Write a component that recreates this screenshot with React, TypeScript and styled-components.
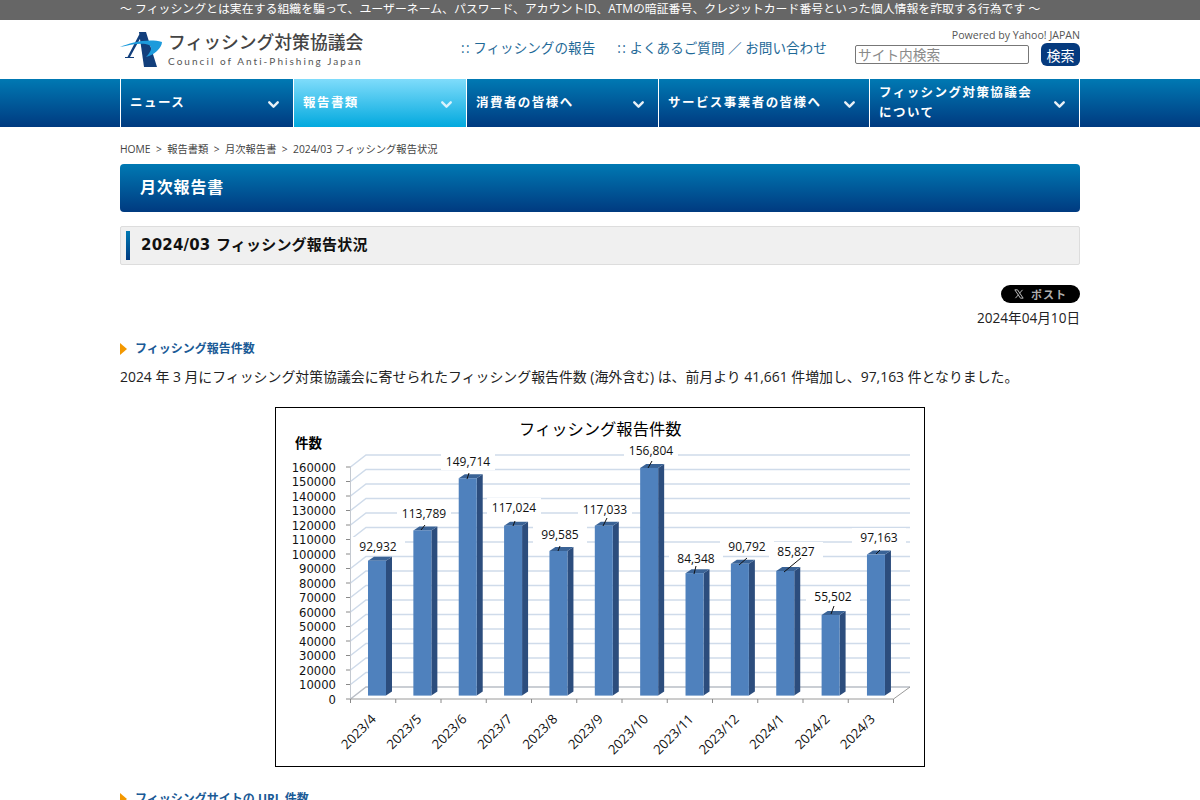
import React from "react";
import styled, { createGlobalStyle } from "styled-components";
import { ChevronDown } from "lucide-react";

const FONT = `"Open Sans", "Noto Sans CJK JP", sans-serif`;

const GlobalStyle = createGlobalStyle`
  html, body {
    margin: 0;
    padding: 0;
    height: 800px;
    overflow: hidden;
    background: #fff;
    color: #222;
    font-family: ${FONT};
  }
`;

const navItems = [
  { label: "ニュース", width: 173 },
  { label: "報告書類", width: 173, active: true },
  { label: "消費者の皆様へ", width: 192 },
  { label: "サービス事業者の皆様へ", width: 211 },
  { label: "フィッシング対策協議会について", width: 210 },
];

const bars = [
  { month: "2023/4", value: 92932, text: "92,932", lx: 378, ly: 546 },
  { month: "2023/5", value: 113789, text: "113,789", lx: 424, ly: 513, tick: [421, 530, 425, 525] },
  { month: "2023/6", value: 149714, text: "149,714", lx: 468, ly: 461, tick: [467, 479, 469, 473] },
  { month: "2023/7", value: 117024, text: "117,024", lx: 514, ly: 507, tick: [513, 526, 515, 521] },
  { month: "2023/8", value: 99585, text: "99,585", lx: 560, ly: 534, tick: [558, 551, 560, 546] },
  { month: "2023/9", value: 117033, text: "117,033", lx: 605, ly: 509, tick: [603, 526, 607, 518] },
  { month: "2023/10", value: 156804, text: "156,804", lx: 651, ly: 450, tick: [648, 468, 652, 461] },
  { month: "2023/11", value: 84348, text: "84,348", lx: 696, ly: 558, tick: [694, 574, 696, 566] },
  { month: "2023/12", value: 90792, text: "90,792", lx: 747, ly: 546, tick: [739, 565, 747, 558] },
  { month: "2024/1", value: 85827, text: "85,827", lx: 796, ly: 551, tick: [784, 572, 801, 558] },
  { month: "2024/2", value: 55502, text: "55,502", lx: 833, ly: 596, tick: [831, 614, 834, 606] },
  { month: "2024/3", value: 97163, text: "97,163", lx: 879, ly: 537, tick: [876, 554, 880, 550] },
];

const ZERO = 699;
const STEP = 14.5;
const FLOOR = 695.6;
const ticks = Array.from({ length: 17 }, (_, i) => i * 10000);

const PhishingChart = () => (
  <ChartSvg viewBox="275 407 650 360" width="650" height="360">
    <rect x="275.5" y="407.5" width="649" height="359" fill="#fff" stroke="#000" />
    <text x="519" y="435" fontSize="16.3" fill="#000" fontFamily={`"Noto Sans CJK JP", sans-serif`}>
      フィッシング報告件数
    </text>
    <text x="295" y="448" fontSize="13.5" fontWeight="700" fill="#000" fontFamily={`"Noto Sans CJK JP", sans-serif`}>
      件数
    </text>
    {ticks.map((t, i) => {
      const y = ZERO - i * STEP;
      return (
        <g key={t}>
          <path d={`M350.5 ${y} L366 ${y - 12} H910`} fill="none" stroke={i === 0 ? "#b9bec6" : "#cfdbea"} strokeWidth="1.5" />
          <path d={`M346 ${y} H350.5`} stroke="#8a8a8a" />
          <text x="336" y={y + 4.5} textAnchor="end" fontSize="11.6" fill="#111" fontFamily="DejaVu Sans">
            {t}
          </text>
        </g>
      );
    })}
    <path d={`M350.5 ${ZERO} V467`} stroke="#c4c9d0" />
    <path d={`M350.5 ${ZERO} H893.5 L910 687`} fill="none" stroke="#9a9a9a" />
    <path d={`M350.5 ${ZERO} v4`} stroke="#8a8a8a" />
    {bars.map((b, i) => {
      const x = 368 + i * 45.36;
      const top = FLOOR - (b.value / 10000) * 14.52;
      return (
        <g key={b.month}>
          <path d={`M${x + 18} ${top} l6 -4 V${FLOOR - 4} l-6 4 Z`} fill="#2c4d7d" />
          <path d={`M${x} ${top} l6 -4 h18 l-6 4 Z`} fill="#3a6396" />
          <rect x={x} y={top} width="18" height={FLOOR - top} fill="#4f81bd" />
          <path d={`M${350.5 + (i + 1) * 45.25} ${ZERO} v4`} stroke="#8a8a8a" />
          <rect x={b.lx - 27} y={b.ly - 9} width="54" height="18" fill="#fff" />
          <text x={b.lx} y={b.ly + 4.5} textAnchor="middle" fontSize="12" fill="#111">
            {b.text}
          </text>
          {b.tick && <line x1={b.tick[0]} y1={b.tick[1]} x2={b.tick[2]} y2={b.tick[3]} stroke="#111" />}
          <text
            transform={`translate(${x + 1} 712) rotate(-45)`}
            textAnchor="end"
            dominantBaseline="hanging"
            fontSize="13.2"
            fill="#111"
          >
            {b.month}
          </text>
        </g>
      );
    })}
  </ChartSvg>
);

const Logo = () => (
  <svg width="44" height="38" viewBox="0 0 44 38">
    <path d="M19 1 H26 L37 36 H24 Z" fill="#123f7c" />
    <path d="M19.5 3 L7.5 26 H5 V27 H14 V26 H10 L21 6 Z" fill="#123f7c" />
    <path d="M0 16 C10 12 28 7 42 11 C42 17 34 24 26 26 C31 21 33 16 29 14 C22 11 10 14 0 16 Z" fill="#1d9bdc" />
  </svg>
);

export default function App() {
  return (
    <>
      <GlobalStyle />
      <TopBar>
        <TopBarText>〜 フィッシングとは実在する組織を騙って、ユーザーネーム、パスワード、アカウントID、ATMの暗証番号、クレジットカード番号といった個人情報を詐取する行為です 〜</TopBarText>
      </TopBar>
      <Header>
        <Brand>
          <Logo />
          <BrandText>
            <BrandName>フィッシング対策協議会</BrandName>
            <BrandSub>Council of Anti-Phishing Japan</BrandSub>
          </BrandText>
        </Brand>
        <HeaderLinks>
          <HeaderLink><Dots>::</Dots>フィッシングの報告</HeaderLink>
          <HeaderLink><Dots>::</Dots>よくあるご質問 ／ お問い合わせ</HeaderLink>
        </HeaderLinks>
        <SearchBlock>
          <Powered>Powered by Yahoo! JAPAN</Powered>
          <SearchRow>
            <SearchInput placeholder="サイト内検索" />
            <SearchButton>検索</SearchButton>
          </SearchRow>
        </SearchBlock>
      </Header>
      <NavBand>
        <Nav>
          {navItems.map((item) => (
            <NavItem key={item.label} $width={item.width} $active={item.active}>
              <NavLabel>{item.label}</NavLabel>
              <ChevronDown size={17} strokeWidth={3.4} color={item.active ? "#d8f3fd" : "#e8f0f6"} />
            </NavItem>
          ))}
        </Nav>
      </NavBand>
      <Main>
        <Breadcrumb>HOME &nbsp;&gt;&nbsp; 報告書類 &nbsp;&gt;&nbsp; 月次報告書 &nbsp;&gt;&nbsp; 2024/03 フィッシング報告状況</Breadcrumb>
        <PageTitle>月次報告書</PageTitle>
        <SubTitle>2024/03 フィッシング報告状況</SubTitle>
        <PostRow>
          <PostButton>
            <svg width="10" height="10" viewBox="0 0 24 24">
              <path d="M2 2h6.5l13.5 20h-6.5zM20.5 2 13 10.5M11 13.5 3.5 22" fill="none" stroke="#bbb" strokeWidth="2.4" />
            </svg>
            ポスト
          </PostButton>
        </PostRow>
        <DateLine>2024年04月10日</DateLine>
        <SectionHead>フィッシング報告件数</SectionHead>
        <Paragraph>
          2024 年 3 月にフィッシング対策協議会に寄せられたフィッシング報告件数 (海外含む) は、前月より 41,661 件増加し、97,163 件となりました。
        </Paragraph>
        <ChartWrap>
          <PhishingChart />
        </ChartWrap>
        <SectionHead>フィッシングサイトの URL 件数</SectionHead>
      </Main>
    </>
  );
}

const TopBar = styled.div`
  height: 20px;
  background: #666;
  color: #fff;
`;
const TopBarText = styled.div`
  width: 960px;
  margin: 0 auto;
  font-size: 11.9px;
  line-height: 17px;
  white-space: nowrap;
`;
const Header = styled.header`
  width: 960px;
  height: 59px;
  margin: 0 auto;
  display: flex;
`;
const Brand = styled.div`
  width: 341px;
  display: flex;
  align-items: flex-start;
  padding-top: 11px;
  box-sizing: border-box;
  gap: 4px;
`;
const BrandText = styled.div`
  display: flex;
  flex-direction: column;
`;
const BrandName = styled.div`
  font-size: 17.8px;
  line-height: 22px;
  font-weight: 500;
  color: #444;
  white-space: nowrap;
`;
const BrandSub = styled.div`
  font-family: "Lato", sans-serif;
  font-size: 10px;
  line-height: 12px;
  margin-top: 2px;
  letter-spacing: 2.05px;
  color: #555;
  white-space: nowrap;
`;
const HeaderLinks = styled.div`
  width: 394px;
  display: flex;
  gap: 22px;
  padding-top: 18px;
  box-sizing: border-box;
`;
const HeaderLink = styled.a`
  font-size: 13.6px;
  line-height: 20px;
  color: #1f6a98;
  white-space: nowrap;
`;
const Dots = styled.span`
  letter-spacing: 1.5px;
  margin-right: 2px;
`;
const SearchBlock = styled.div`
  width: 225px;
  display: flex;
  flex-direction: column;
  align-items: flex-end;
  padding-top: 9px;
`;
const Powered = styled.div`
  font-size: 10.6px;
  line-height: 13px;
  color: #555;
`;
const SearchRow = styled.div`
  display: flex;
  justify-content: space-between;
  align-items: center;
  width: 100%;
  margin-top: 1px;
`;
const SearchInput = styled.input`
  width: 174px;
  height: 19px;
  box-sizing: border-box;
  border: 1px solid #777;
  border-radius: 2px;
  padding: 0 2px;
  font-family: ${FONT};
  font-size: 13.7px;
  outline: none;
  &::placeholder {
    color: #8a8a8a;
  }
`;
const SearchButton = styled.button`
  width: 39px;
  height: 23px;
  border: none;
  border-radius: 6px;
  background: #053a7e;
  color: #fff;
  padding: 0;
  font-family: ${FONT};
  font-size: 14px;
`;
const NavBand = styled.div`
  height: 48px;
  background: linear-gradient(#0079b3, #003a80);
`;
const Nav = styled.nav`
  width: 960px;
  height: 48px;
  margin: 0 auto;
  display: flex;
  border-right: 1px solid #fff;
  box-sizing: border-box;
`;
const NavItem = styled.div<{ $width: number; $active?: boolean }>`
  width: ${(p) => p.$width}px;
  flex: none;
  box-sizing: border-box;
  display: flex;
  align-items: center;
  justify-content: space-between;
  padding: 0 11px 0 9px;
  border-left: 1px solid #fff;
  background: ${(p) => (p.$active ? "linear-gradient(#7fdcfb, #02a9de)" : "none")};
  svg {
    flex: none;
    margin-top: 3px;
  }
`;
const NavLabel = styled.span`
  max-width: 165px;
  color: #fff;
  font-size: 12.5px;
  font-weight: 700;
  line-height: 20px;
  letter-spacing: 1.45px;
`;
const Main = styled.main`
  width: 960px;
  margin: 0 auto;
`;
const Breadcrumb = styled.div`
  margin-top: 15px;
  font-size: 10.3px;
  line-height: 14px;
  color: #444;
  white-space: nowrap;
`;
const PageTitle = styled.h1`
  margin: 8px 0 0;
  height: 48px;
  padding-left: 20px;
  border-radius: 4px;
  background: linear-gradient(#0079b3, #003a80);
  color: #fff;
  font-size: 16px;
  font-weight: 700;
  line-height: 46px;
  letter-spacing: 0.8px;
`;
const SubTitle = styled.h2`
  position: relative;
  margin: 14px 0 0;
  height: 39px;
  box-sizing: border-box;
  padding-left: 20px;
  border: 1px solid #ddd;
  border-radius: 2px;
  background: #f0f0f0;
  color: #111;
  font-family: "DejaVu Sans", "Noto Sans CJK JP", sans-serif;
  font-size: 15px;
  font-weight: 700;
  line-height: 36px;
  letter-spacing: 0.2px;
  &::before {
    content: "";
    position: absolute;
    left: 5px;
    top: 4px;
    width: 4px;
    height: 29px;
    background: linear-gradient(#0079b3, #003a80);
  }
`;
const PostRow = styled.div`
  display: flex;
  justify-content: flex-end;
  margin-top: 20px;
`;
const PostButton = styled.div`
  width: 79px;
  height: 18px;
  border-radius: 9px;
  background: #000;
  color: #b0b0b0;
  font-size: 11px;
  font-weight: 700;
  letter-spacing: 1px;
  display: flex;
  align-items: center;
  justify-content: center;
  gap: 7px;
`;
const DateLine = styled.div`
  margin: 6px 0 14px;
  text-align: right;
  font-size: 13.6px;
  line-height: 18px;
`;
const SectionHead = styled.h3`
  position: relative;
  margin: 13px 0 0;
  padding-left: 15px;
  color: #1a5a96;
  font-size: 12px;
  font-weight: 700;
  line-height: 16px;
  &::before {
    content: "";
    position: absolute;
    left: 0;
    top: 2px;
    border-left: 7px solid #f39800;
    border-top: 6px solid transparent;
    border-bottom: 6px solid transparent;
  }
`;
const Paragraph = styled.p`
  margin: 10px 0 0;
  font-size: 13.9px;
  line-height: 20px;
  white-space: nowrap;
`;
const ChartWrap = styled.div`
  display: flex;
  justify-content: center;
  margin-top: 20px;
  margin-bottom: 24px;
`;
const ChartSvg = styled.svg`
  display: block;
  font-family: "Open Sans", sans-serif;
`;
